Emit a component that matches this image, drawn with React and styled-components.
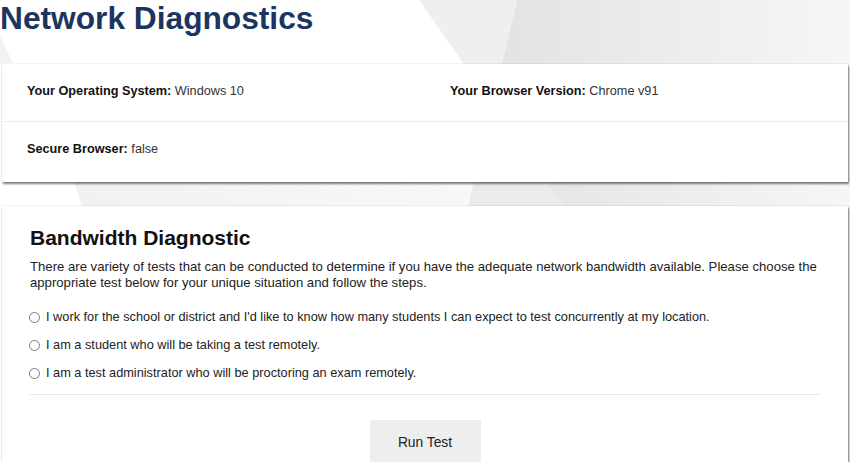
import React from "react";
import styled, { createGlobalStyle } from "styled-components";

const GlobalStyle = createGlobalStyle`
  html, body { margin: 0; padding: 0; background: #ffffff; }
  body { font-family: "Liberation Sans", Arial, sans-serif; color: #222; }
  * { box-sizing: border-box; }
`;

const Page = styled.div`
  position: relative;
  width: 850px;
  height: 462px;
  overflow: hidden;
  background: #ffffff;
`;

const Backdrop = styled.svg`
  position: absolute;
  inset: 0;
  width: 850px;
  height: 462px;
  z-index: 0;
`;

const Content = styled.div`
  position: relative;
  z-index: 1;
  display: flex;
  flex-direction: column;
`;

const Title = styled.h1`
  margin: 0;
  font-size: 31.7px;
  line-height: 36px;
  font-weight: 700;
  color: #1c3560;
`;

const Card = styled.section`
  margin: ${(p) => p.$top}px 2px 0;
  background: #ffffff;
  box-shadow: 1px 2px 2px rgba(0, 0, 0, 0.5), 0 0 1px rgba(0, 0, 0, 0.25);
  padding: ${(p) => p.$padding};
`;

const InfoRow = styled.div`
  display: grid;
  grid-template-columns: 1fr 1fr;
  border-bottom: ${(p) => (p.$divider ? "1px solid #ececec" : "none")};
`;

const InfoCell = styled.div`
  padding: 19px 25px 22px;
  font-size: 12.7px;
  line-height: 16px;
  color: #333;
`;

const Label = styled.strong`
  font-weight: 700;
  color: #111;
`;

const Heading = styled.h2`
  margin: 0;
  font-size: 21px;
  line-height: 24px;
  font-weight: 700;
  color: #111;
`;

const Intro = styled.p`
  margin: 9px 0 0;
  font-size: 13.15px;
  line-height: 16px;
  color: #222;
`;

const Options = styled.div`
  display: flex;
  flex-direction: column;
  gap: 12px;
  margin-top: 18px;
`;

const Option = styled.label`
  display: flex;
  align-items: center;
  font-size: 12.75px;
  line-height: 16px;
  color: #222;
  cursor: pointer;
`;

const Radio = styled.input`
  appearance: none;
  -webkit-appearance: none;
  width: 11px;
  height: 11px;
  margin: 0 6px 0 -1px;
  border: 1px solid #7a7a7a;
  border-radius: 50%;
  background: #fff;
  flex: none;
  &:checked {
    background: radial-gradient(circle, #1c3560 0 3px, #fff 3.5px);
  }
`;

const Divider = styled.hr`
  margin: 13px 0 0;
  border: none;
  border-top: 1px solid #e8e8e8;
`;

const Actions = styled.div`
  display: flex;
  justify-content: center;
  padding-top: 25px;
`;

const RunButton = styled.button`
  height: 44px;
  width: 111px;
  padding: 0;
  border: none;
  background: #eeeeee;
  font-family: "Liberation Sans", Arial, sans-serif;
  font-size: 13.8px;
  color: #222;
  cursor: pointer;
`;

const options = [
  "I work for the school or district and I'd like to know how many students I can expect to test concurrently at my location.",
  "I am a student who will be taking a test remotely.",
  "I am a test administrator who will be proctoring an exam remotely.",
];

export default function App() {
  return (
    <>
      <GlobalStyle />
      <Page>
        <Backdrop viewBox="0 0 850 462" preserveAspectRatio="none">
          <defs>
            <linearGradient id="darkFacet" x1="480" y1="0" x2="850" y2="0" gradientUnits="userSpaceOnUse">
              <stop offset="0" stopColor="#e2e2e2" />
              <stop offset="1" stopColor="#f6f6f6" />
            </linearGradient>
            <linearGradient id="bandFacet" x1="70" y1="0" x2="470" y2="0" gradientUnits="userSpaceOnUse">
              <stop offset="0" stopColor="#f1f1f1" />
              <stop offset="1" stopColor="#f8f8f8" />
            </linearGradient>
          </defs>
          <polygon points="517,0 850,0 850,462 742,462 492,104.5" fill="url(#darkFacet)" />
          <polygon points="419,0 517,0 492,104.5" fill="#efefef" />
          <polygon points="492,104.5 742,462 407,462" fill="#ebebeb" />
          <polygon points="71,170 476,170 466,214 84,214" fill="url(#bandFacet)" />
          <polygon points="0,36 13,63 0,63" fill="#f2f2f2" />
        </Backdrop>
        <Content>
          <Title>Network Diagnostics</Title>
          <Card $top={28} $padding="0 0 3px">
            <InfoRow $divider>
              <InfoCell>
                <Label>Your Operating System:</Label> Windows 10
              </InfoCell>
              <InfoCell>
                <Label>Your Browser Version:</Label> Chrome v91
              </InfoCell>
            </InfoRow>
            <InfoRow>
              <InfoCell>
                <Label>Secure Browser:</Label> false
              </InfoCell>
            </InfoRow>
          </Card>
          <Card $top={24} $padding="20px 28px 30px">
            <Heading>Bandwidth Diagnostic</Heading>
            <Intro>
              There are variety of tests that can be conducted to determine if you have the adequate network
              bandwidth available. Please choose the appropriate test below for your unique situation and follow
              the steps.
            </Intro>
            <Options>
              {options.map((text) => (
                <Option key={text}>
                  <Radio type="radio" name="testType" />
                  {text}
                </Option>
              ))}
            </Options>
            <Divider />
            <Actions>
              <RunButton type="button">Run Test</RunButton>
            </Actions>
          </Card>
        </Content>
      </Page>
    </>
  );
}
